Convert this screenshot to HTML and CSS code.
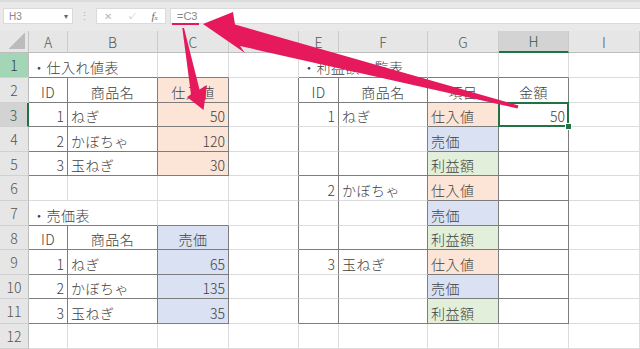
FILE: index.html
```html
<!DOCTYPE html>
<html lang="ja">
<head>
  <meta charset="UTF-8" />
  <title>利益額一覧表</title>
  <link rel="stylesheet" href="styles.css">
</head>
<body>

<div class="app">
  <div class="toolbar">
    <div class="namebox"><span>H3</span><span class="caret">▾</span></div>
    <div class="grip">⋮</div>
    <div class="fxbox"><span>✕</span><span>✓</span><span class="fx">f<small>x</small></span></div>
    <div class="formula">=C3</div>
  </div>

  <div class="sheet">
    <!-- column headers -->
    <div class="corner"></div>
    <div class="ch">A</div>
    <div class="ch">B</div>
    <div class="ch">C</div>
    <div class="ch">D</div>
    <div class="ch">E</div>
    <div class="ch">F</div>
    <div class="ch">G</div>
    <div class="ch ch-sel">H</div>
    <div class="ch">I</div>

    <!-- row 1 -->
    <div class="rh rh-green">1</div>
    <div class="c b span2">・仕入れ値表</div>
    <div class="c b"></div>
    <div class="c"></div>
    <div class="c b span2">・利益額一覧表</div>
    <div class="c b"></div>
    <div class="c b"></div>
    <div class="c"></div>

    <!-- row 2 -->
    <div class="rh">2</div>
    <div class="c r b m">ID</div>
    <div class="c r b m">商品名</div>
    <div class="c r b m pe">仕入値</div>
    <div class="c r"></div>
    <div class="c r b m">ID</div>
    <div class="c r b m">商品名</div>
    <div class="c r b m">項目</div>
    <div class="c r b m">金額</div>
    <div class="c"></div>

    <!-- row 3 -->
    <div class="rh rh-sel">3</div>
    <div class="c r b n">1</div>
    <div class="c r b">ねぎ</div>
    <div class="c r b n pe">50</div>
    <div class="c r"></div>
    <div class="c r n">1</div>
    <div class="c r">ねぎ</div>
    <div class="c r b pe">仕入値</div>
    <div class="c r b n sel">50</div>
    <div class="c"></div>

    <!-- row 4 -->
    <div class="rh">4</div>
    <div class="c r b n">2</div>
    <div class="c r b">かぼちゃ</div>
    <div class="c r b n pe">120</div>
    <div class="c r"></div>
    <div class="c r"></div>
    <div class="c r"></div>
    <div class="c r b bl">売価</div>
    <div class="c r b"></div>
    <div class="c"></div>

    <!-- row 5 -->
    <div class="rh">5</div>
    <div class="c r b n">3</div>
    <div class="c r b">玉ねぎ</div>
    <div class="c r b n pe">30</div>
    <div class="c r"></div>
    <div class="c r b"></div>
    <div class="c r b"></div>
    <div class="c r b gr">利益額</div>
    <div class="c r b"></div>
    <div class="c"></div>

    <!-- row 6 -->
    <div class="rh">6</div>
    <div class="c"></div>
    <div class="c"></div>
    <div class="c"></div>
    <div class="c r"></div>
    <div class="c r n">2</div>
    <div class="c r">かぼちゃ</div>
    <div class="c r b pe">仕入値</div>
    <div class="c r b"></div>
    <div class="c"></div>

    <!-- row 7 -->
    <div class="rh">7</div>
    <div class="c b span2">・売価表</div>
    <div class="c b"></div>
    <div class="c r"></div>
    <div class="c r"></div>
    <div class="c r"></div>
    <div class="c r b bl">売価</div>
    <div class="c r b"></div>
    <div class="c"></div>

    <!-- row 8 -->
    <div class="rh">8</div>
    <div class="c r b m">ID</div>
    <div class="c r b m">商品名</div>
    <div class="c r b m bl">売価</div>
    <div class="c r"></div>
    <div class="c r b"></div>
    <div class="c r b"></div>
    <div class="c r b gr">利益額</div>
    <div class="c r b"></div>
    <div class="c"></div>

    <!-- row 9 -->
    <div class="rh">9</div>
    <div class="c r b n">1</div>
    <div class="c r b">ねぎ</div>
    <div class="c r b n bl">65</div>
    <div class="c r"></div>
    <div class="c r n">3</div>
    <div class="c r">玉ねぎ</div>
    <div class="c r b pe">仕入値</div>
    <div class="c r b"></div>
    <div class="c"></div>

    <!-- row 10 -->
    <div class="rh">10</div>
    <div class="c r b n">2</div>
    <div class="c r b">かぼちゃ</div>
    <div class="c r b n bl">135</div>
    <div class="c r"></div>
    <div class="c r"></div>
    <div class="c r"></div>
    <div class="c r b bl">売価</div>
    <div class="c r b"></div>
    <div class="c"></div>

    <!-- row 11 -->
    <div class="rh">11</div>
    <div class="c r b n">3</div>
    <div class="c r b">玉ねぎ</div>
    <div class="c r b n bl">35</div>
    <div class="c r"></div>
    <div class="c r b"></div>
    <div class="c r b"></div>
    <div class="c r b gr">利益額</div>
    <div class="c r b"></div>
    <div class="c"></div>

    <!-- row 12 -->
    <div class="rh">12</div>
    <div class="c"></div>
    <div class="c"></div>
    <div class="c"></div>
    <div class="c"></div>
    <div class="c"></div>
    <div class="c"></div>
    <div class="c"></div>
    <div class="c"></div>
    <div class="c"></div>
  </div>

  <!-- annotation arrows drawn over the sheet -->
  <svg class="arrows" width="640" height="349" viewBox="0 0 640 349">
    <rect x="172" y="23" width="27" height="2" fill="#e5195b"/>
    <polygon fill="#e5195b" points="203,24 233,12 235,24.5 518.5,105.5 517.5,108.5 240,46 245,53"/>
    <polygon fill="#e5195b" points="182.3,28 184,28 199.5,89.5 207,85 203.5,110 187,97 191,94.5"/>
  </svg>
</div>

</body>
</html>
```

FILE: styles.css
```css
body {
  margin: 0;
  font-family: "Noto Sans CJK JP", sans-serif;
  background: #fff;
  overflow: hidden;
}

.app {
  position: relative;
  width: 640px;
  height: 349px;
  overflow: hidden;
}

/* formula bar */
.toolbar {
  display: flex;
  height: 31px;
  box-sizing: border-box;
  padding: 6px 0 0 3px;
  background: #e9e9e9;
  border-top: 2px solid #dcdcdc;
  font-family: "Liberation Sans", sans-serif;
}

.namebox,
.fxbox,
.formula {
  height: 16px;
  box-sizing: border-box;
  background: #fff;
  border: 1px solid #dadada;
}

.namebox {
  width: 70px;
  display: flex;
  justify-content: space-between;
  align-items: center;
  padding: 0 4px 0 5px;
  font-size: 10px;
  color: #888;
}

.caret {
  font-size: 8px;
  color: #666;
}

.grip {
  width: 23px;
  text-align: center;
  font-size: 11px;
  line-height: 16px;
  color: #b5b5b5;
}

.fxbox {
  width: 70px;
  margin-right: 4px;
  display: flex;
  justify-content: space-around;
  align-items: center;
  font-size: 10px;
  color: #b8b8b8;
}

.fx {
  font-family: "Liberation Serif", serif;
  font-style: italic;
  font-size: 11px;
  color: #666;
}

.fx small {
  font-size: 7px;
}

.formula {
  flex: 1;
  padding-left: 6px;
  font-size: 11px;
  line-height: 14px;
  color: #888;
  border-right: none;
}

/* grid */
.sheet {
  display: grid;
  grid-template-columns: 29px 39px 90px 71px 70px 40px 89px 71px 70px 71px;
  grid-template-rows: 22px 25px 25px 24px 25px 24px 25px 25px 24px 25px 24px 25px 25px;
}

.corner {
  background: #e6e6e6 linear-gradient(135deg, transparent 50%, #bcbcbc 50%) no-repeat right 3px bottom 3px / 16px 16px;
  border-right: 1px solid #c4c4c4;
  border-bottom: 1px solid #bdbdbd;
}

.ch {
  display: flex;
  justify-content: center;
  align-items: center;
  background: #e6e6e6;
  border-right: 1px solid #cbcbcb;
  border-bottom: 1px solid #bdbdbd;
  font-size: 14px;
  font-weight: 300;
  color: #555;
}

.ch-sel {
  background: #d3d3d3;
  color: #2e5d40;
  border-bottom: 2px solid #217346;
}

.rh {
  display: flex;
  justify-content: center;
  align-items: center;
  box-sizing: border-box;
  background: #e6e6e6;
  border-right: 1px solid #bdbdbd;
  border-bottom: 1px solid #d0d0d0;
  font-size: 14px;
  font-weight: 300;
  color: #555;
}

.rh-green {
  background: #a2d6b7;
  color: #2f3f35;
}

.rh-sel {
  background: #d3d3d3;
  color: #2e5d40;
  border-right: 2px solid #217346;
}

.c {
  display: flex;
  align-items: flex-end;
  box-sizing: border-box;
  padding: 0 3px;
  border-right: 1px solid #dcdcdc;
  border-bottom: 1px solid #dcdcdc;
  font-size: 14px;
  font-weight: 300;
  line-height: 20px;
  letter-spacing: 0.5px;
  color: #404040;
  white-space: nowrap;
}

.span2 {
  grid-column: span 2;
}

.r {
  border-right-color: #7d7d7d;
}

.b {
  border-bottom-color: #7d7d7d;
}

.n {
  justify-content: flex-end;
  letter-spacing: 0;
}

.m {
  justify-content: center;
}

.pe {
  background: #fce4d6;
}

.bl {
  background: #d9e1f2;
}

.gr {
  background: #e2efda;
}

/* selected cell H3 */
.sel {
  position: relative;
}

.sel::after {
  content: "";
  position: absolute;
  top: -1px;
  left: -1px;
  right: -1px;
  bottom: -1px;
  border: 2px solid #217346;
}

.sel::before {
  content: "";
  position: absolute;
  right: -4px;
  bottom: -4px;
  width: 5px;
  height: 5px;
  background: #217346;
  border: 1px solid #fff;
  z-index: 2;
}

.arrows {
  position: absolute;
  top: 0;
  left: 0;
  pointer-events: none;
}
```
